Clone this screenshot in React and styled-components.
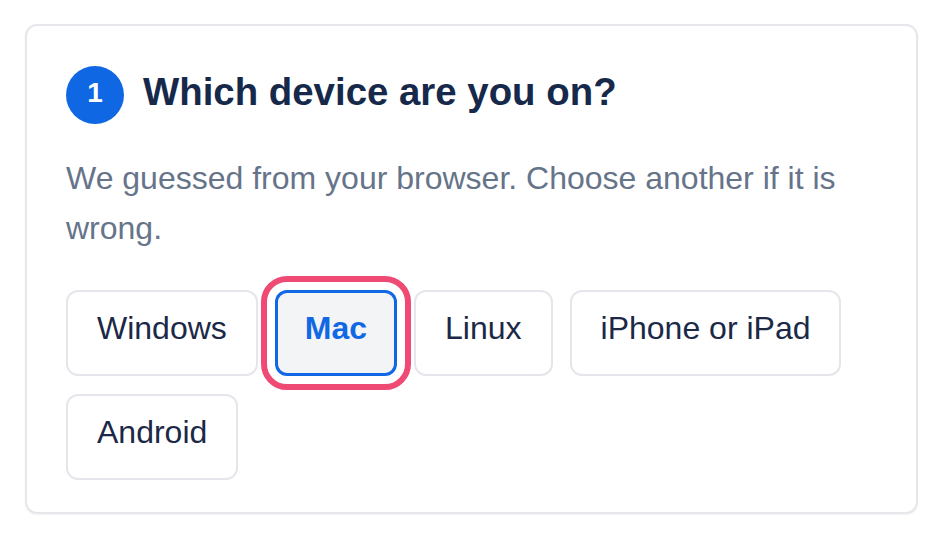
import styled, { createGlobalStyle } from 'styled-components';

const GlobalStyle = createGlobalStyle`
  body {
    margin: 0;
    background: #ffffff;
    font-family: "Liberation Sans", Arial, sans-serif;
  }
`;

const Page = styled.div`
  padding: 24px 26px 24px 25px;
`;

const Card = styled.section`
  box-sizing: border-box;
  width: 893px;
  padding: 40px 39px 32px 39px;
  border: 2px solid #e6e7eb;
  border-radius: 12px;
  background: #ffffff;
  box-shadow: 0 1px 2px rgba(16, 24, 40, 0.05);
`;

const Header = styled.div`
  display: flex;
  align-items: center;
  gap: 19px;
`;

const StepBadge = styled.div`
  box-sizing: border-box;
  display: flex;
  align-items: center;
  justify-content: center;
  width: 58px;
  height: 58px;
  padding-bottom: 4px;
  flex-shrink: 0;
  border-radius: 50%;
  background: #0f67e4;
  color: #ffffff;
  font-size: 28px;
  font-weight: 700;
`;

const Title = styled.h2`
  margin: 0 0 6px;
  font-size: 38.4px;
  font-weight: 700;
  color: #16294b;
`;

const Hint = styled.p`
  margin: 29px 0 37px;
  font-size: 32px;
  line-height: 50px;
  color: #66748a;
`;

const Options = styled.div`
  display: flex;
  flex-wrap: wrap;
  gap: 18px 17px;
`;

const Option = styled.button`
  box-sizing: border-box;
  height: 86px;
  padding: 0 ${(p) => (p.$selected ? 27 : 29)}px 10px;
  border: ${(p) => (p.$selected ? '3px solid #1068e4' : '2px solid #e5e6eb')};
  border-radius: 12px;
  background: ${(p) => (p.$selected ? '#f3f4f6' : '#ffffff')};
  color: ${(p) => (p.$selected ? '#1068e4' : '#1b2947')};
  font-family: inherit;
  font-size: 32px;
  font-weight: ${(p) => (p.$selected ? 700 : 400)};
  line-height: 48px;
  cursor: pointer;
  outline: ${(p) => (p.$selected ? '6px solid #ef4a74' : 'none')};
  outline-offset: 8px;
`;

const devices = ['Windows', 'Mac', 'Linux', 'iPhone or iPad', 'Android'];

const App = () => {
  const selected = 'Mac';

  return (
    <Page>
      <GlobalStyle />
      <Card>
        <Header>
          <StepBadge>1</StepBadge>
          <Title>Which device are you on?</Title>
        </Header>
        <Hint>
          We guessed from your browser. Choose another if it is wrong.
        </Hint>
        <Options>
          {devices.map((d) => (
            <Option key={d} $selected={d === selected}>
              {d}
            </Option>
          ))}
        </Options>
      </Card>
    </Page>
  );
};

export default App;
